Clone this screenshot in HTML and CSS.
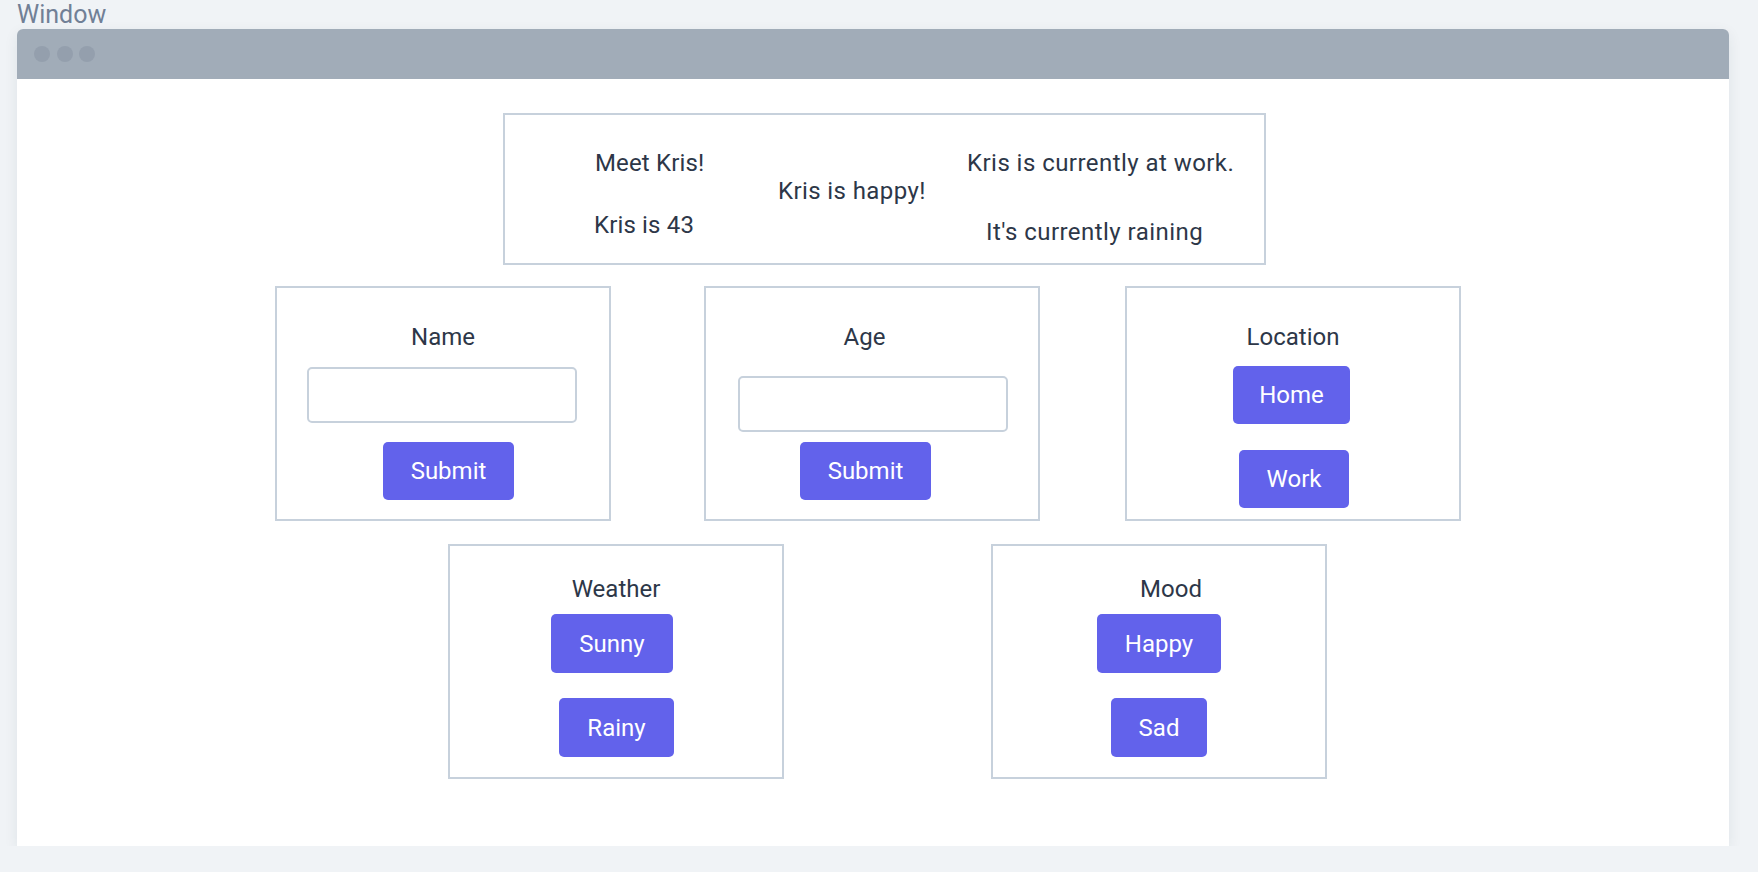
FILE: index.html
```html
<!DOCTYPE html>
<html>
<head>
<meta charset="utf-8">
<title>Window</title>
<link rel="stylesheet" href="styles.css">
</head>
<body>
  <div class="window-label">Window</div>
  <div class="window">
    <div class="titlebar">
      <span class="dot"></span><span class="dot"></span><span class="dot"></span>
    </div>
    <div class="content">
      <div class="row row-summary">
        <div class="summary">
          <div class="col col-a">
            <div class="txt">Meet Kris!</div>
            <div class="txt age-txt">Kris is 43</div>
          </div>
          <div class="col col-b">
            <div class="txt">Kris is happy!</div>
          </div>
          <div class="col col-c">
            <div class="txt">Kris is currently at work.</div>
            <div class="txt rain-txt">It's currently raining</div>
          </div>
        </div>
      </div>

      <div class="row row-two">
        <div class="card card-name">
          <div class="label">Name</div>
          <input class="field field-name" type="text">
          <button class="btn btn-name-submit">Submit</button>
        </div>
        <div class="card card-age">
          <div class="label label-age">Age</div>
          <input class="field field-age" type="text">
          <button class="btn btn-age-submit">Submit</button>
        </div>
        <div class="card card-location">
          <div class="label">Location</div>
          <button class="btn btn-home">Home</button>
          <button class="btn btn-work">Work</button>
        </div>
      </div>

      <div class="row row-three">
        <div class="card card-weather">
          <div class="label label-weather">Weather</div>
          <button class="btn tall btn-sunny">Sunny</button>
          <button class="btn tall btn-rainy">Rainy</button>
        </div>
        <div class="card card-mood">
          <div class="label label-weather label-mood">Mood</div>
          <button class="btn tall btn-sunny">Happy</button>
          <button class="btn tall btn-rainy">Sad</button>
        </div>
      </div>
    </div>
  </div>
</body>
</html>
```
FILE: styles.css
```css
* { box-sizing: border-box; }

html, body {
  margin: 0;
  padding: 0;
  background: #f0f3f6;
  font-family: Roboto, "Liberation Sans", sans-serif;
  color: #2d3748;
}

.window-label {
  padding-left: 17px;
  font-size: 25px;
  line-height: 30px;
  height: 29px;
  color: #718096;
}

.window {
  margin-left: 17px;
  width: 1712px;
  height: 817px;
  background: #ffffff;
  border-radius: 6px 6px 0 0;
  box-shadow: 0 4px 14px rgba(30, 45, 70, 0.08);
  display: flex;
  flex-direction: column;
}

.titlebar {
  height: 50px;
  flex: none;
  background: #a1acb8;
  border-radius: 6px 6px 0 0;
  display: flex;
  align-items: center;
  gap: 6.5px;
  padding-left: 17px;
}

.dot {
  width: 16px;
  height: 16px;
  border-radius: 50%;
  background: #949fad;
}

.content {
  flex: 1;
  display: flex;
  flex-direction: column;
  font-size: 24px;
  line-height: 28px;
}

.row { display: flex; align-items: flex-start; }

.row-summary { margin-top: 34px; padding-left: 486px; }
.row-two { margin-top: 21px; padding-left: 258px; }
.row-three { margin-top: 23px; padding-left: 431px; }

/* summary box */
.summary {
  width: 763px;
  height: 152px;
  border: 2px solid #c7d1dc;
  display: flex;
  align-items: flex-start;
}
.col { display: flex; flex-direction: column; align-items: flex-start; }
.txt { white-space: nowrap; }
.col-a { margin-left: 90px; width: 183px; padding-top: 34px; letter-spacing: 0.15px; }
.col-a .age-txt { margin-top: 34px; margin-left: -1px; }
.col-b { width: 189px; padding-top: 62px; letter-spacing: 0.4px; }
.col-c { padding-top: 34px; letter-spacing: 0.45px; }
.col-c .rain-txt { margin-top: 41px; margin-left: 19px; }

/* cards */
.card {
  width: 336px;
  height: 235px;
  border: 2px solid #c7d1dc;
  display: flex;
  flex-direction: column;
  align-items: center;
  padding-top: 35px;
}
.card-age { margin-left: 93px; }
.card-location { margin-left: 85px; }
.card-weather, .card-mood { padding-top: 29px; }
.card-mood { margin-left: 207px; }

.label { white-space: nowrap; }
.label-age { margin-right: 15px; }
.label-mood { margin-left: 24px; }

.field {
  display: block;
  width: 270px;
  height: 56px;
  border: 2px solid #c7d1dc;
  border-radius: 5px;
  background: #fff;
  font: inherit;
  outline: none;
}
.field-name { margin-top: 16px; margin-right: 2px; }
.field-age { margin-top: 25px; margin-left: 2px; }

.btn {
  display: block;
  height: 58px;
  padding: 0 28px;
  border: none;
  border-radius: 5px;
  background: #6262eb;
  color: #ffffff;
  font-family: inherit;
  font-size: 24px;
  line-height: 28px;
  cursor: pointer;
}
.btn.tall { height: 59px; }
.btn-name-submit { margin-top: 19px; margin-left: 11px; }
.btn-age-submit { margin-top: 10px; margin-right: 13px; }
.btn-home { margin-top: 15px; margin-right: 3px; padding: 0 26px; }
.btn-work { margin-top: 26px; margin-left: 2px; }
.btn-sunny { margin-top: 11px; }
.card-weather .btn-sunny { margin-right: 8px; }
.btn-rainy { margin-top: 25px; }
.card-weather .btn-rainy { margin-left: 1px; }
```
